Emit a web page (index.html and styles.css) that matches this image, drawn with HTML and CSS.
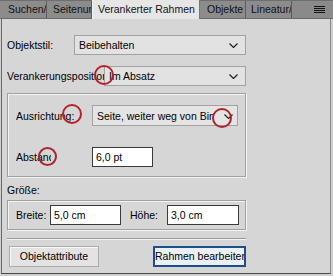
FILE: index.html
```html
<!DOCTYPE html>
<html lang="de">
<head>
  <meta charset="UTF-8">
  <title>Verankerter Rahmen</title>
  <link rel="stylesheet" href="styles.css">
</head>
<body>
  <div class="tabs">
    <div class="tab tab-search">Suchen/</div>
    <div class="tab tab-pages">Seitenumbruch</div>
    <div class="tab tab-active">Verankerter Rahmen</div>
    <div class="tab tab-objects">Objekte</div>
    <div class="tab tab-ruler">Lineatur/</div>
    <div class="tab-rest">
      <svg class="menu-icon" width="11" height="8" viewBox="0 0 11 8">
        <path d="M0 0.5h11M0 2.5h11M0 4.5h11M0 6.5h11" stroke="#111" stroke-width="1"/>
      </svg>
    </div>
  </div>

  <div class="panel">
    <div class="row row-style">
      <span class="label label-style">Objektstil:</span>
      <div class="select select-style">
        <span class="select-text">Beibehalten</span>
        <svg class="chevron" width="9" height="5" viewBox="0 0 9 5"><path d="M0.5 0.5l4 4 4-4" fill="none" stroke="#222" stroke-width="1.2"/></svg>
      </div>
    </div>

    <div class="row row-anchor">
      <span class="label label-anchor">Verankerungsposition:</span>
      <div class="select select-anchor">
        <span class="select-text">Im Absatz</span>
        <svg class="chevron" width="9" height="5" viewBox="0 0 9 5"><path d="M0.5 0.5l4 4 4-4" fill="none" stroke="#222" stroke-width="1.2"/></svg>
      </div>
    </div>

    <div class="group group-align">
      <div class="row row-align">
        <span class="label label-align">Ausrichtung:</span>
        <div class="select select-align">
          <span class="select-text">Seite, weiter weg von Bindung</span>
          <svg class="chevron" width="9" height="5" viewBox="0 0 9 5"><path d="M0.5 0.5l4 4 4-4" fill="none" stroke="#222" stroke-width="1.2"/></svg>
        </div>
      </div>
      <div class="row row-space">
        <span class="label label-space">Abstand:</span>
        <div class="field field-space">6,0 pt</div>
      </div>
    </div>

    <div class="caption">Größe:</div>

    <div class="group group-size">
      <div class="row row-size">
        <span class="label label-width">Breite:</span>
        <div class="field field-width">5,0 cm</div>
        <span class="label label-height">Höhe:</span>
        <div class="field field-height">3,0 cm</div>
      </div>
    </div>

    <div class="separator"></div>

    <div class="row row-buttons">
      <div class="button button-attr">Objektattribute</div>
      <div class="button button-edit">Rahmen bearbeiten</div>
    </div>

    <span class="mark mark-1"></span>
    <span class="mark mark-2"></span>
    <span class="mark mark-3"></span>
    <span class="mark mark-4"></span>
  </div>
</body>
</html>
```

FILE: styles.css
```css
body {
  margin: 0;
  background: #cfcfcf;
  font-family: "Liberation Sans", Arial, sans-serif;
  font-size: 10.5px;
  color: #000;
  width: 333px;
  height: 276px;
  overflow: hidden;
}

/* tab strip */
.tabs {
  display: flex;
  height: 19px;
  background: #8a8a8a;
  box-sizing: border-box;
  border-top: 1px solid #6e6e6e;
}

.tab {
  height: 18px;
  line-height: 17px;
  box-sizing: border-box;
  padding-left: 8px;
  white-space: nowrap;
  overflow: hidden;
  color: #111;
  border-right: 1px solid #5c5c5c;
  border-bottom: 1px solid #6a6a6a;
  background: #8c8c8c;
}

.tab-search { width: 47px; }
.tab-pages { width: 45px; padding-left: 6px; }
.tab-objects { width: 46px; padding-left: 7px; }
.tab-ruler { width: 46px; padding-left: 5px; }

.tab-active {
  width: 108px;
  height: 19px;
  margin-top: -1px;
  padding-left: 5px;
  line-height: 19px;
  background: #e6e6e6;
  border-bottom: none;
  border-right: 1px solid #777;
  border-left: 1px solid #f4f4f4;
}

.tab-rest {
  flex: 1;
  height: 18px;
  border-bottom: 1px solid #6a6a6a;
  display: flex;
  justify-content: flex-end;
  align-items: center;
  padding-right: 8px;
  box-sizing: border-box;
}

/* panel */
.panel {
  position: relative;
  margin-left: 1px;
  margin-right: 2px;
  height: 255px;
  box-sizing: border-box;
  padding: 16px 0 0 5px;
  background: #d6d6d6;
  border-left: 1px solid #6a6a6a;
  border-right: 1px solid #8a8a8a;
  border-bottom: 1px solid #4a4a4a;
}

.row {
  display: flex;
  align-items: center;
}

.label {
  white-space: nowrap;
  overflow: hidden;
}

.row-style { height: 20px; }
.row-anchor { margin-top: 11px; height: 20px; }

.label-style { width: 67px; }
.label-anchor { width: 97px; }

.select {
  position: relative;
  height: 20px;
  box-sizing: border-box;
  background: #e2e2e2;
  border: 1px solid #a2a2a2;
  display: flex;
  align-items: center;
  padding-left: 4px;
  overflow: hidden;
}

.select-text {
  white-space: nowrap;
  overflow: hidden;
  flex: 1;
}

.chevron {
  flex: none;
  margin: 1px 7px 0 4px;
}

.select-style { width: 172px; }
.select-anchor { width: 142px; }

/* grouped frames */
.group {
  width: 239px;
  box-sizing: border-box;
  border: 1px solid #a0a0a0;
  box-shadow: inset 1px 1px 0 #f4f4f4, 1px 1px 0 #f4f4f4;
  padding-left: 8px;
}

.group-align {
  margin-top: 7px;
  height: 84px;
  padding-top: 11px;
}

.row-align { height: 21px; }
.row-space { height: 20px; margin-top: 21px; }

.label-align { width: 64px; margin-right: 12px; }
.label-space { width: 35px; margin-right: 41px; }

.select-align {
  width: 146px;
  height: 21px;
  background: #e4e4e4;
}

.select-align .select-text { flex: none; width: 117px; }
.select-align .chevron { margin-left: 10px; margin-right: 0; }

.field {
  height: 20px;
  box-sizing: border-box;
  background: #fff;
  border: 1px solid #3a3a3a;
  padding-left: 3px;
  line-height: 18px;
  white-space: nowrap;
}

.field-space { width: 61px; }

.caption {
  margin-top: 5px;
  height: 16px;
  line-height: 16px;
}

.group-size {
  margin-top: 2px;
  height: 30px;
  padding-top: 4px;
}

.row-size { height: 20px; }
.label-width { width: 34px; }
.field-width { width: 71px; }
.label-height { width: 37px; margin-left: 9px; }
.field-height { width: 72px; }

.separator {
  width: 239px;
  margin-top: 8px;
  height: 1px;
  background: #9a9a9a;
  border-bottom: 1px solid #f4f4f4;
}

.row-buttons {
  margin-top: 6px;
  height: 21px;
}

.button {
  height: 21px;
  box-sizing: border-box;
  line-height: 19px;
  white-space: nowrap;
  overflow: hidden;
}

.button-attr {
  width: 90px;
  margin-left: 2px;
  background: #e3e3e3;
  border: 1px solid #acacac;
  box-shadow: inset 1px 1px 0 #fafafa;
  text-align: center;
}

.button-edit {
  width: 93px;
  margin-left: 54px;
  background: #eaf0f6;
  border: 2px solid #1d4f8c;
  line-height: 17px;
  padding-left: 0;
}

/* red review marks */
.mark {
  position: absolute;
  width: 20px;
  height: 20px;
  box-sizing: border-box;
  border: 2px solid #b2222c;
  border-radius: 50%;
}

.mark-1 { left: 92px; top: 46px; }
.mark-2 { left: 60px; top: 85px; }
.mark-3 { left: 210px; top: 89px; }
.mark-4 { left: 36px; top: 128px; width: 19px; height: 19px; }
```
